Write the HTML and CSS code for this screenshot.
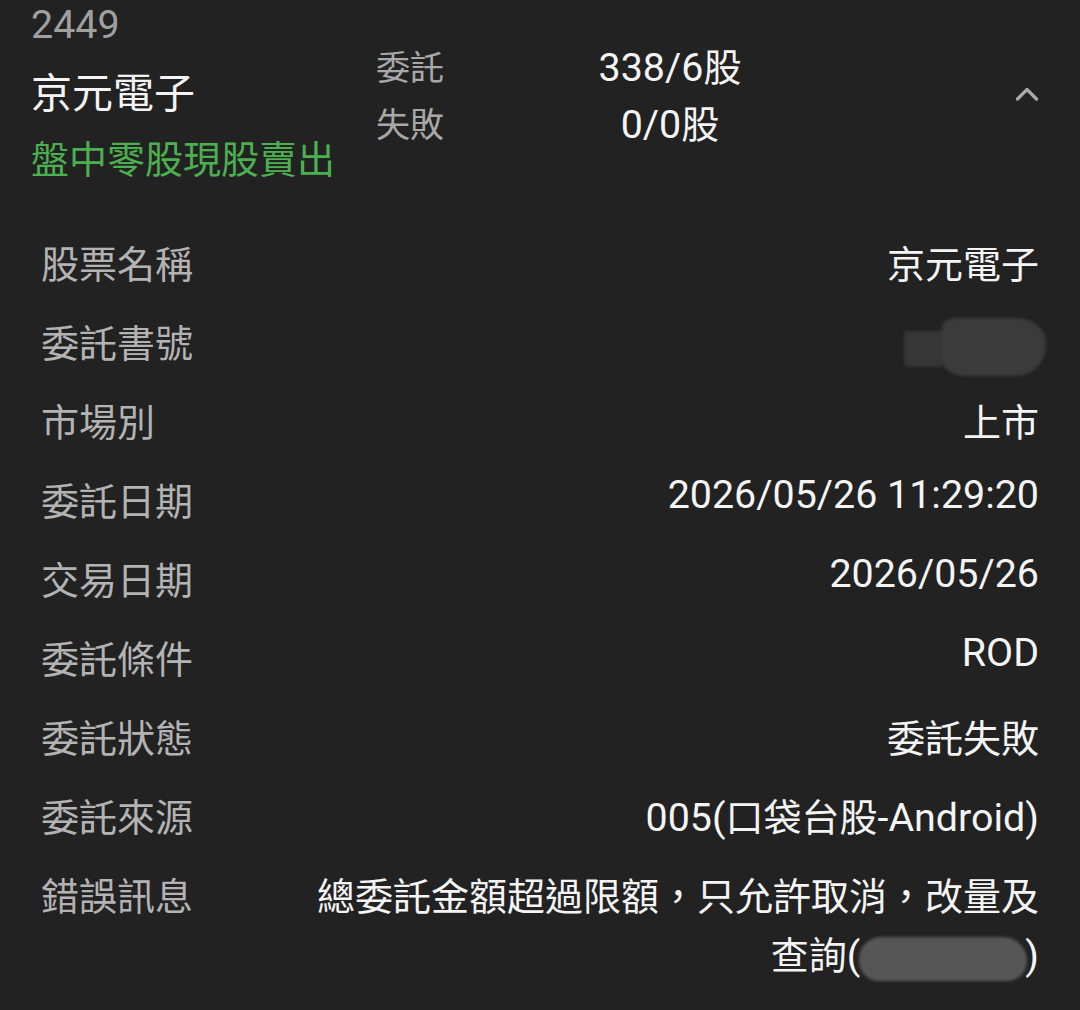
FILE: index.html
```html
<!DOCTYPE html>
<html lang="zh-Hant">
<head>
<meta charset="utf-8">
<title>京元電子</title>
<link rel="stylesheet" href="styles.css">
</head>
<body>
<div class="page">
  <header class="summary">
    <div class="stock">
      <div class="code"><span class="lat">2449</span></div>
      <div class="name">京元電子</div>
      <div class="type">盤中零股現股賣出</div>
    </div>
    <div class="counts">
      <div class="count-label">委託</div>
      <div class="count-value"><span class="lat">338/6</span>股</div>
      <div class="count-label">失敗</div>
      <div class="count-value"><span class="lat">0/0</span>股</div>
    </div>
    <div class="toggle">
      <svg class="chevron" width="24" height="16" viewBox="0 0 24 16">
        <polyline points="2.5,13 12,3.5 21.5,13" fill="none" stroke="#a9a9a9" stroke-width="3.2" stroke-linecap="round" stroke-linejoin="round"/>
      </svg>
    </div>
  </header>

  <section class="details">
    <div class="row"><div class="label">股票名稱</div><div class="value">京元電子</div></div>
    <div class="row"><div class="label">委託書號</div><div class="value"><span class="redact-a"><span class="ra-left"></span><span class="ra-right"></span></span></div></div>
    <div class="row"><div class="label">市場別</div><div class="value">上市</div></div>
    <div class="row"><div class="label">委託日期</div><div class="value"><span class="lat up">2026/05/26 11:29:20</span></div></div>
    <div class="row"><div class="label">交易日期</div><div class="value"><span class="lat up">2026/05/26</span></div></div>
    <div class="row"><div class="label">委託條件</div><div class="value"><span class="lat up">ROD</span></div></div>
    <div class="row"><div class="label">委託狀態</div><div class="value">委託失敗</div></div>
    <div class="row"><div class="label">委託來源</div><div class="value"><span class="lat">005(</span>口袋台股<span class="lat">-Android)</span></div></div>
    <div class="row"><div class="label">錯誤訊息</div><div class="value">總委託金額超過限額，只允許取消，改量及<br>查詢<span class="lat">(</span><span class="redact-b"></span><span class="lat">)</span></div></div>
  </section>
</div>
</body>
</html>
```

FILE: styles.css
```css
html, body {
  margin: 0;
  padding: 0;
  background: #222222;
}

body {
  font-family: Roboto, "Noto Sans CJK TC", sans-serif;
  color: #f2f2f2;
  width: 1080px;
  height: 1010px;
  overflow: hidden;
}

.lat {
  font-size: 39.4px;
  line-height: 0;
}

.up {
  vertical-align: 7px;
}

.page {
  display: flex;
  flex-direction: column;
}

.summary {
  display: flex;
  align-items: flex-start;
}

.stock {
  width: 345px;
  padding-left: 31px;
  display: flex;
  flex-direction: column;
}

.code {
  font-size: 38px;
  line-height: 50px;
  color: #a0a0a0;
}

.name {
  font-size: 41px;
  line-height: 52px;
  margin-top: 18px;
  color: #f4f4f4;
}

.type {
  font-size: 38px;
  line-height: 56px;
  margin-top: 12px;
  color: #4caf50;
}

.counts {
  display: grid;
  grid-template-columns: 184px 220px;
  padding-top: 40px;
}

.count-label {
  font-size: 34px;
  line-height: 57px;
  color: #a8a8a8;
}

.count-value {
  font-size: 38px;
  line-height: 57px;
  text-align: center;
  color: #f4f4f4;
}

.toggle {
  margin-left: auto;
  padding-right: 41px;
  padding-top: 86px;
  display: flex;
}

.chevron {
  display: block;
}

.details {
  display: flex;
  flex-direction: column;
  gap: 20px;
  padding: 48px 41px 0 41px;
}

.row {
  display: flex;
  align-items: flex-start;
  font-size: 38px;
  line-height: 59px;
}

.label {
  width: 240px;
  flex: 0 0 240px;
  color: #b3b3b3;
}

.value {
  flex: 1;
  text-align: right;
  color: #f4f4f4;
}

.redact-a {
  display: inline-flex;
  align-items: center;
  vertical-align: middle;
  height: 59px;
  margin: -10px -7px -10px 0;
  filter: blur(1.5px);
}

.ra-left {
  width: 38px;
  height: 36px;
  margin-top: 4px;
  background: #363636;
  border-radius: 3px 0 0 6px;
}

.ra-right {
  width: 104px;
  height: 58px;
  background: #3b3b3b;
  border-radius: 14px 30px 30px 24px / 10px 24px 30px 16px;
}

.redact-b {
  display: inline-block;
  vertical-align: middle;
  width: 168px;
  height: 44px;
  margin: -6px -2px -6px -1px;
  background: #565656;
  border-radius: 22px 24px 20px 20px;
  filter: blur(1.5px);
}
```
